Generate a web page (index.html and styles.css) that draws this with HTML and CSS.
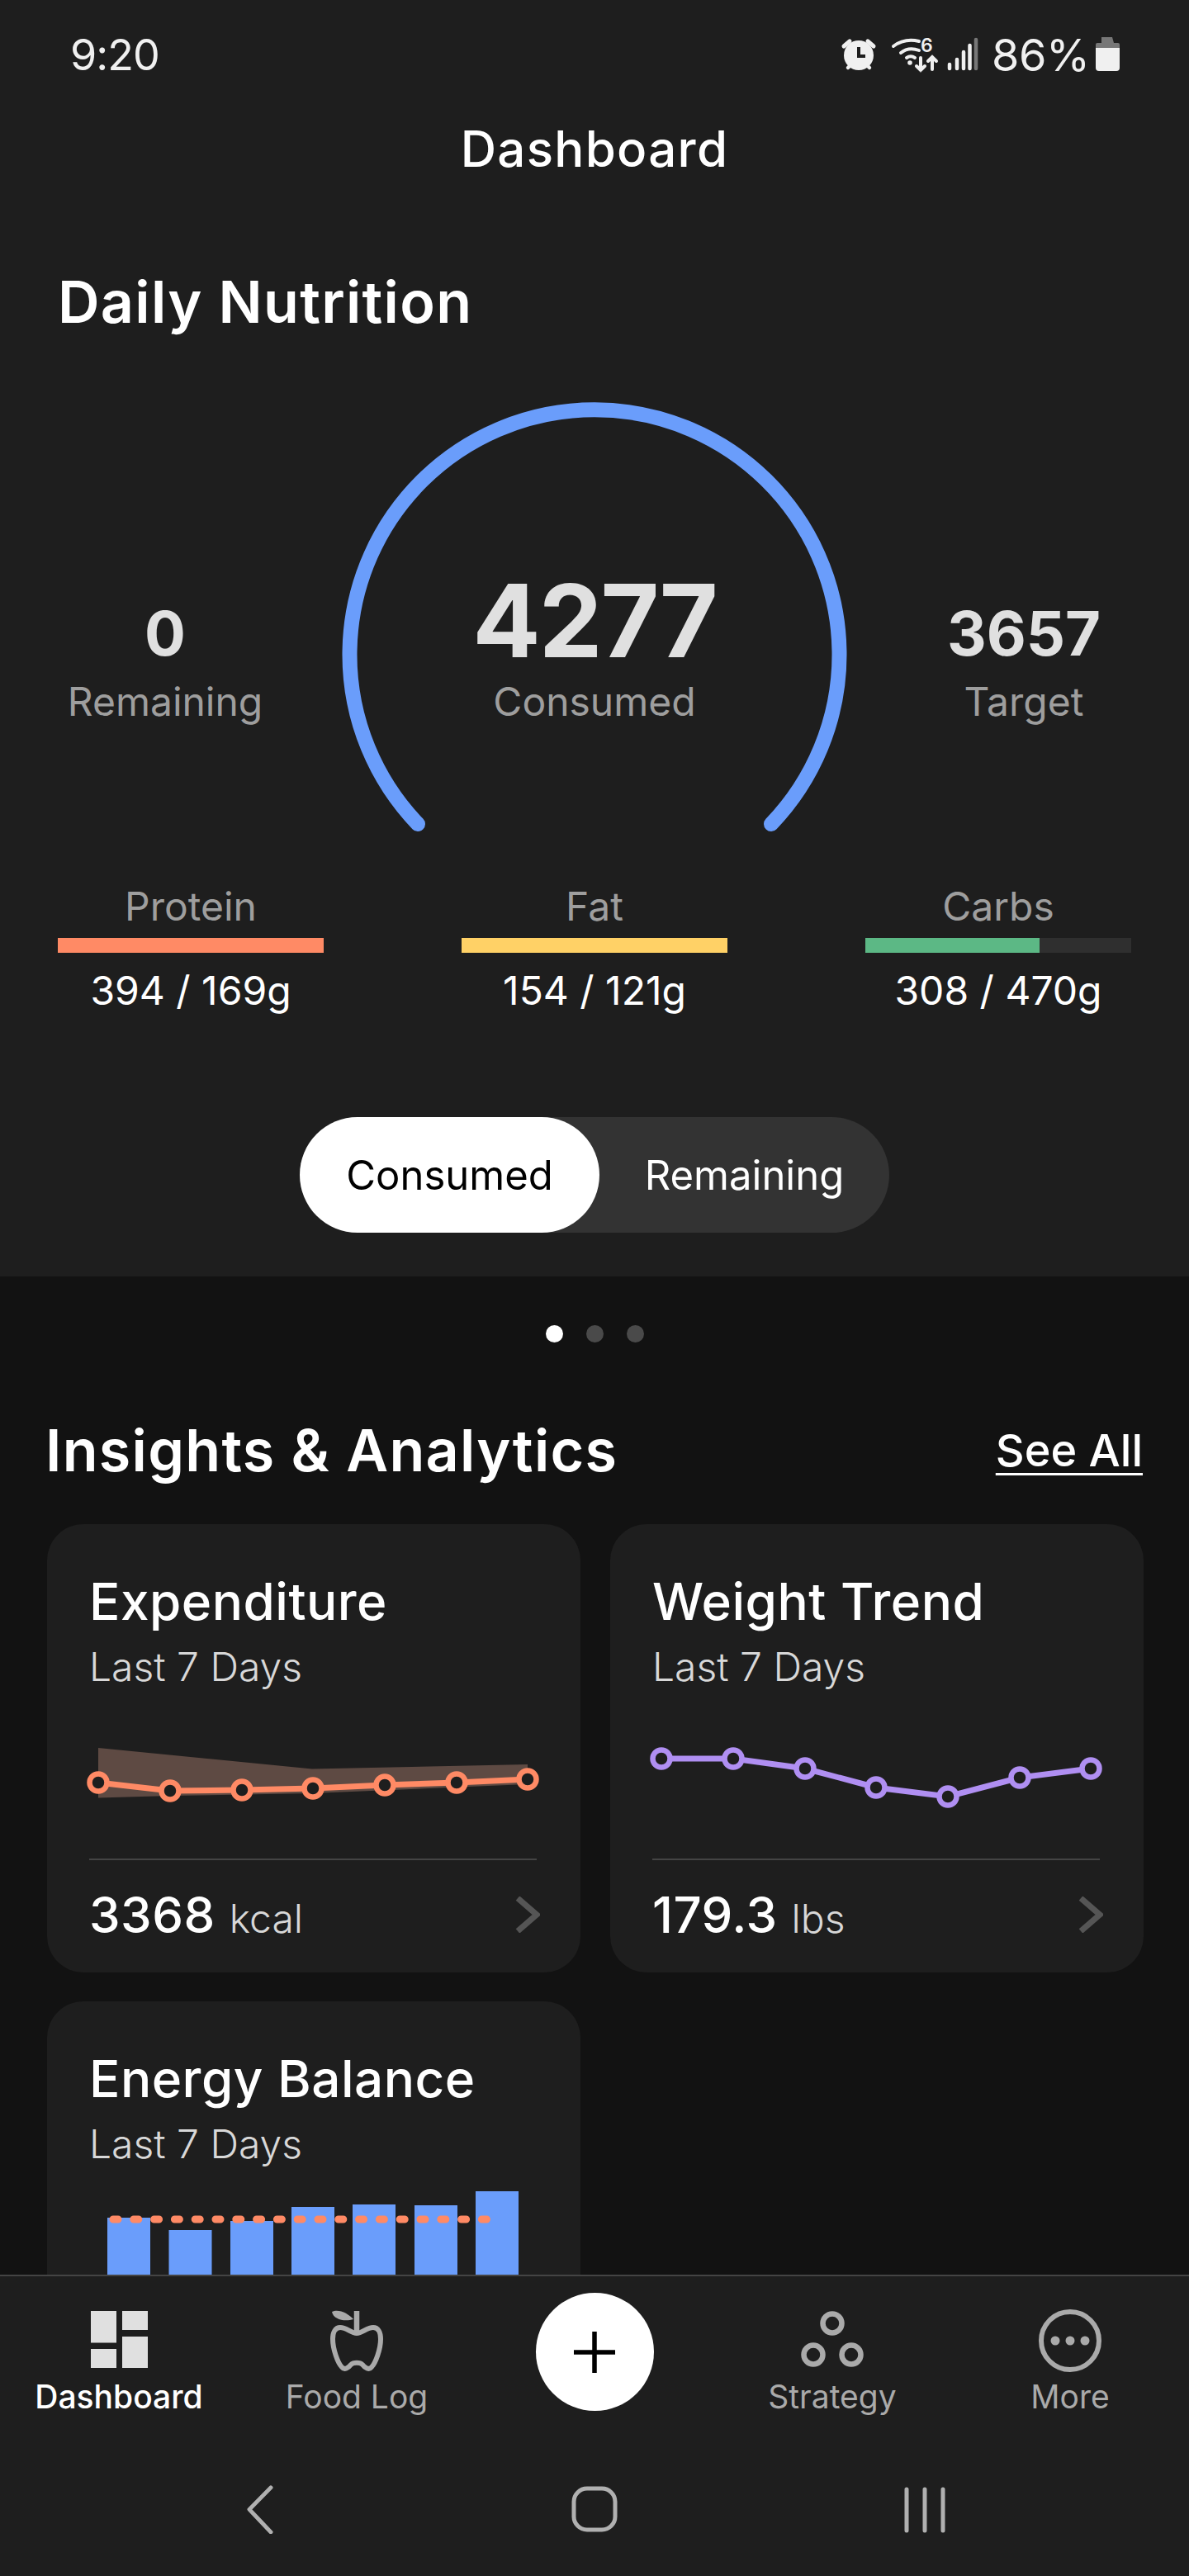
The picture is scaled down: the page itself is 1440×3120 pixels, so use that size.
FILE: index.html
```html
<!DOCTYPE html>
<html lang="en">
<head>
<meta charset="utf-8">
<title>Dashboard</title>
<link rel="stylesheet" href="styles.css">
</head>
<body>
<main class="scroll">
  <section class="top">
    <div class="status">
      <span class="clock">9:20</span>
      <div class="status-right">
        <svg class="st-alarm" viewBox="1018 46 44 44"><path d="M1022 58l7-6M1058 58l-7-6" stroke="#f0f0f0" stroke-width="5" stroke-linecap="round"/><path d="M1027 84l4-4M1053 84l-4-4" stroke="#f0f0f0" stroke-width="4.5" stroke-linecap="round"/><circle cx="1040" cy="69" r="18" fill="#f0f0f0"/><path d="M1040 59v11h8" fill="none" stroke="#1e1e1e" stroke-width="4"/></svg>
        <svg class="st-wifi" viewBox="1078 46 58 44"><g fill="none" stroke="#f0f0f0" stroke-width="4" stroke-linecap="round"><path d="M1082 58c8-6 18-9 31-6"/><path d="M1091 66c6-5 14-6 22-3"/><path d="M1098 72c3-2 7-2 10 0"/><path d="M1115 72v15M1110 82l5 5 5-5M1129 86V71M1124 76l5-5 5 5"/></g><circle cx="1102" cy="78" r="2.8" fill="#f0f0f0"/><text x="1115" y="65" class="st-six">6</text></svg>
        <svg class="st-signal" viewBox="1146 46 40 44"><g stroke="#f0f0f0" stroke-width="4.500" stroke-linecap="round"><path d="M1150 80v5M1159 74v11M1167 65v20M1174.500 57v28"/></g><path d="M1182 50v35" stroke="#777" stroke-width="4.500" stroke-linecap="round"/></svg>
        <span class="pct">86%</span>
        <svg class="st-batt" viewBox="1326 46 30 44"><path d="M1334 47h13l2 7h5a2 2 0 0 1 2 2v4h-29v-4a2 2 0 0 1 2-2h5z" fill="#777"/><path d="M1327 60h29v24a4 4 0 0 1-4 4h-21a4 4 0 0 1-4-4z" fill="#f0f0f0"/></svg>
      </div>
    </div>
    <h1 class="page-title">Dashboard</h1>
    <h2 class="daily">Daily Nutrition</h2>
    <div class="gauge-row">
      <div class="stat">
        <div class="stat-num">0</div>
        <div class="stat-label">Remaining</div>
      </div>
      <div class="gauge">
        <svg class="gauge-arc" viewBox="400 480 640 588"><path d="M506 998A296.500 296.500 0 1 1 934 998" fill="none" stroke="#6a9dfb" stroke-width="18" stroke-linecap="round"/></svg>
        <div class="gauge-center">
          <div class="gauge-num">4277</div>
          <div class="stat-label">Consumed</div>
        </div>
      </div>
      <div class="stat">
        <div class="stat-num">3657</div>
        <div class="stat-label">Target</div>
      </div>
    </div>
    <div class="macros">
      <div class="macro">
        <div class="macro-label">Protein</div>
        <div class="track"><div class="fill fill-protein" style="width:100%"></div></div>
        <div class="macro-val">394 / 169g</div>
      </div>
      <div class="macro">
        <div class="macro-label">Fat</div>
        <div class="track"><div class="fill fill-fat" style="width:100%"></div></div>
        <div class="macro-val">154 / 121g</div>
      </div>
      <div class="macro">
        <div class="macro-label">Carbs</div>
        <div class="track"><div class="fill fill-carbs" style="width:65.5%"></div></div>
        <div class="macro-val">308 / 470g</div>
      </div>
    </div>
    <div class="toggle">
      <div class="seg seg-on">Consumed</div>
      <div class="seg">Remaining</div>
    </div>
  </section>

  <div class="dots"><i class="dot dot-on"></i><i class="dot"></i><i class="dot"></i></div>

  <div class="insights-head">
    <h2 class="insights">Insights &amp; Analytics</h2>
    <a class="see-all">See All</a>
  </div>

  <div class="cards">
    <article class="card">
      <h3 class="card-title">Expenditure</h3>
      <div class="card-sub">Last 7 Days</div>
      <svg class="chart" viewBox="57 2049 646 202">
        <path d="M119 2117L378 2142.500L639 2137V2161L378 2172L206 2175L119 2177.500Z" fill="#5e4a43"/>
        <polyline points="119,2159 206,2169 293,2168 379,2166 466,2162 553,2159 639,2155" fill="none" stroke="#ff8a65" stroke-width="7"/>
        <g fill="#1e1e1e" stroke="#ff8a65" stroke-width="6.5"><circle cx="119" cy="2159" r="10.500"/><circle cx="206" cy="2169" r="10.500"/><circle cx="293" cy="2168" r="10.500"/><circle cx="379" cy="2166" r="10.500"/><circle cx="466" cy="2162" r="10.500"/><circle cx="553" cy="2159" r="10.500"/><circle cx="639" cy="2155" r="10.500"/></g>
      </svg>
      <div class="card-rule"></div>
      <div class="card-foot">
        <div><span class="val">3368</span><span class="unit">kcal</span></div>
        <svg class="chev" viewBox="0 0 30 44"><path d="M3 2l23 20-23 20" fill="none" stroke="#555" stroke-width="7"/></svg>
      </div>
    </article>
    <article class="card">
      <h3 class="card-title">Weight Trend</h3>
      <div class="card-sub">Last 7 Days</div>
      <svg class="chart" viewBox="739 2049 646 202">
        <polyline points="801,2130 888,2130 975,2142 1061,2165 1148,2176 1235,2153 1321,2142" fill="none" stroke="#b08ff2" stroke-width="7"/>
        <g fill="#1e1e1e" stroke="#b08ff2" stroke-width="6.5"><circle cx="801" cy="2130" r="10.500"/><circle cx="888" cy="2130" r="10.500"/><circle cx="975" cy="2142" r="10.500"/><circle cx="1061" cy="2165" r="10.500"/><circle cx="1148" cy="2176" r="10.500"/><circle cx="1235" cy="2153" r="10.500"/><circle cx="1321" cy="2142" r="10.500"/></g>
      </svg>
      <div class="card-rule"></div>
      <div class="card-foot">
        <div><span class="val">179.3</span><span class="unit">lbs</span></div>
        <svg class="chev" viewBox="0 0 30 44"><path d="M3 2l23 20-23 20" fill="none" stroke="#555" stroke-width="7"/></svg>
      </div>
    </article>
    <article class="card">
      <h3 class="card-title">Energy Balance</h3>
      <div class="card-sub">Last 7 Days</div>
      <svg class="chart" viewBox="57 2627 646 202">
        <g fill="#6a9dfb"><rect x="130" y="2686" width="52" height="143"/><rect x="204.500" y="2701" width="52" height="128"/><rect x="279" y="2690" width="52" height="139"/><rect x="353" y="2673" width="52" height="156"/><rect x="427" y="2670" width="52" height="159"/><rect x="502" y="2671" width="52" height="158"/><rect x="576" y="2654" width="52" height="175"/></g>
        <path d="M137 2688H602" fill="none" stroke="#ff8a65" stroke-width="9" stroke-linecap="round" stroke-dasharray="6 18.800"/>
      </svg>
    </article>
  </div>
</main>

<nav class="nav">
  <div class="tabs">
    <div class="tab tab-on">
      <svg class="tab-icon" viewBox="106 2797 76 76"><g fill="#e0e0e0"><rect x="110" y="2799" width="31" height="38.500"/><rect x="110" y="2845" width="31" height="23"/><rect x="148" y="2799" width="31" height="23"/><rect x="148" y="2830" width="31" height="38"/></g></svg>
      <span class="tab-label">Dashboard</span>
    </div>
    <div class="tab">
      <svg class="tab-icon" viewBox="394 2797 76 76"><path d="M432 2826C425 2826 420 2819 412 2819C406 2819 403 2825 403 2833C403 2845 409 2862 414 2867C417 2871 422 2868 425 2864C428 2861 436 2861 439 2864C442 2868 447 2871 450 2867C455 2862 461 2845 461 2833C461 2825 458 2819 452 2819C444 2819 439 2826 432 2826Z" fill="none" stroke="#aaa" stroke-width="6"/><path d="M432 2799V2826" stroke="#aaa" stroke-width="6.500"/><path d="M402 2800C410 2796 422 2802 428 2809C418 2812 404 2810 402 2800Z" fill="#aaa"/></svg>
      <span class="tab-label">Food Log</span>
    </div>
    <div class="tab">
      <button class="fab" type="button"><svg class="fab-plus" viewBox="0 0 52 52"><path d="M26 1v50M1 26h50" stroke="#000" stroke-width="5.500"/></svg></button>
    </div>
    <div class="tab">
      <svg class="tab-icon" viewBox="970 2797 76 76"><g fill="none" stroke="#aaa" stroke-width="6.500"><circle cx="1008" cy="2814" r="11.500"/><circle cx="985" cy="2852" r="11.500"/><circle cx="1031" cy="2852" r="11.500"/></g></svg>
      <span class="tab-label">Strategy</span>
    </div>
    <div class="tab">
      <svg class="tab-icon" viewBox="1258 2795 76 76"><circle cx="1296" cy="2833" r="35" fill="none" stroke="#aaa" stroke-width="6"/><g fill="#aaa"><circle cx="1278" cy="2833" r="5.500"/><circle cx="1296" cy="2833" r="5.500"/><circle cx="1314" cy="2833" r="5.500"/></g></svg>
      <span class="tab-label">More</span>
    </div>
  </div>
  <div class="sysnav">
    <svg class="sys sys-back" viewBox="0 0 36 60"><path d="M30 4L4 31l26 28" transform="scale(1 .98)" fill="none" stroke="#b0b0b0" stroke-width="5" stroke-linecap="round" stroke-linejoin="round"/></svg>
    <svg class="sys" viewBox="0 0 56 60"><rect x="3" y="5" width="50" height="50" rx="16" fill="none" stroke="#b0b0b0" stroke-width="5"/></svg>
    <svg class="sys" viewBox="0 0 50 60"><path d="M3 6v50M25 6v50M47 6v50" stroke="#b0b0b0" stroke-width="5" stroke-linecap="round"/></svg>
  </div>
</nav>
</body>
</html>
```

FILE: styles.css
```css
* { box-sizing: border-box; }
html, body { margin: 0; padding: 0; }
body {
  width: 1440px;
  height: 3120px;
  display: flex;
  flex-direction: column;
  background: #121212;
  color: #fff;
  font-family: Inter, "Open Sans", sans-serif;
  overflow: hidden;
}
h1, h2, h3 { margin: 0; }

.scroll { flex: 1; min-height: 0; overflow: hidden; }
.top { background: #1e1e1e; padding-bottom: 53px; }

.status {
  height: 132px;
  padding: 0 84px 0 85px;
  display: flex;
  align-items: center;
  justify-content: space-between;
}
.clock { font-size: 52px; letter-spacing: -1px; color: #f0f0f0; }
.status-right { display: flex; align-items: center; }
.st-alarm { width: 44px; height: 44px; margin-right: 16px; }
.st-wifi { width: 58px; height: 44px; margin-right: 10px; overflow: visible; }
.st-six { font-size: 23px; font-weight: 600; fill: #f0f0f0; }
.st-signal { width: 40px; height: 44px; margin-right: 15px; }
.pct { width: 121px; font-size: 54px; letter-spacing: -.5px; white-space: nowrap; color: #f0f0f0; margin-right: 4px; }
.st-batt { width: 30px; height: 44px; }

.page-title {
  height: 96px;
  line-height: 96px;
  text-align: center;
  font-size: 60px;
  font-weight: 500;
  letter-spacing: 1.3px;
}
.daily {
  margin-top: 98px;
  padding-left: 70px;
  line-height: 80px;
  font-size: 70px;
  font-weight: 600;
  letter-spacing: 1.3px;
}

.gauge-row { margin-top: 74px; display: flex; height: 588px; }
.stat { width: 400px; padding-top: 242px; text-align: center; }
.stat-num { font-size: 74px; line-height: 90px; font-weight: 700; color: #e0e0e0; }
.stat-label { margin-top: 8px; font-size: 48px; line-height: 60px; color: #9e9e9e; }
.gauge { width: 640px; position: relative; }
.gauge-arc { display: block; width: 640px; height: 588px; }
.gauge-center { position: absolute; top: 207px; left: 0; right: 0; text-align: center; }
.gauge-num { font-size: 122px; line-height: 130px; font-weight: 700; letter-spacing: -2px; color: #e0e0e0; }
.gauge-center .stat-label { margin-top: 3px; }

.macros { display: flex; justify-content: space-between; padding: 0 70px; }
.macro { width: 322px; text-align: center; }
.macro-label { font-size: 48px; line-height: 60px; color: #9e9e9e; }
.track { margin-top: 8px; height: 18px; background: #2f2f2f; }
.fill { height: 100%; }
.fill-protein { background: #ff8a65; }
.fill-fat { background: #ffd166; }
.fill-carbs { background: #5cb885; }
.macro-val { margin-top: 16px; font-size: 48px; line-height: 60px; white-space: nowrap; }

.toggle {
  margin: 123px auto 0;
  width: 714px;
  height: 140px;
  display: flex;
  border-radius: 70px;
  background: #333;
}
.seg {
  display: flex;
  align-items: center;
  justify-content: center;
  flex: 1;
  font-size: 49px;
}
.seg-on { flex: 0 0 363px; border-radius: 70px; background: #fff; color: #000; }

.dots { padding-top: 59px; display: flex; justify-content: center; gap: 28px; }
.dot { width: 21px; height: 21px; border-radius: 50%; background: #4a4a4a; }
.dot-on { background: #fff; }

.insights-head {
  margin-top: 90px;
  padding: 0 56px 0 55px;
  display: flex;
  justify-content: space-between;
  align-items: center;
  height: 80px;
}
.insights { font-size: 70px; font-weight: 600; letter-spacing: 1.3px; }
.see-all { font-size: 54px; font-weight: 500; text-decoration: underline; text-underline-offset: 8px; text-decoration-thickness: 3px; }

.cards {
  margin: 50px 55px 0 57px;
  display: grid;
  grid-template-columns: 646px 646px;
  column-gap: 36px;
  row-gap: 35px;
}
.card {
  height: 543px;
  padding: 59px 53px 0 51px;
  border-radius: 44px;
  background: #1e1e1e;
}
.card-title { font-size: 62px; line-height: 70px; font-weight: 500; letter-spacing: .5px; }
.card-sub { margin-top: 14px; font-size: 48px; line-height: 60px; font-weight: 300; color: #d8d8d8; }
.chart { display: block; width: 646px; height: 202px; margin: 0 -53px 0 -51px; }
.card-rule { height: 2px; background: #444; }
.card-foot { margin-top: 31px; display: flex; justify-content: space-between; align-items: center; height: 70px; }
.val { font-size: 60px; font-weight: 500; letter-spacing: .5px; }
.unit { margin-left: 17px; font-size: 48px; font-weight: 300; color: #d8d8d8; }
.chev { width: 30px; height: 44px; margin-right: -4px; }

.nav { flex: 0 0 365px; background: #1e1e1e; border-top: 2px solid #444; }
.tabs { display: grid; grid-template-columns: repeat(5, 288px); padding-top: 40px; height: 168px; }
.tab { display: flex; flex-direction: column; align-items: center; }
.tab-icon { width: 76px; height: 76px; }
.tab-label { margin-top: 8px; font-size: 39px; line-height: 44px; color: #aaa; }
.tab-on .tab-label { color: #fff; font-weight: 500; }
.fab {
  margin-top: -20px;
  width: 143px;
  height: 143px;
  border: 0;
  padding: 0;
  border-radius: 50%;
  background: #fff;
  display: flex;
  align-items: center;
  justify-content: center;
}
.fab-plus { width: 52px; height: 52px; }
.sysnav {
  margin-top: 84px;
  padding: 0 120px;
  display: grid;
  grid-template-columns: repeat(3, 400px);
  justify-items: center;
}
.sys { height: 60px; }
.sys-back { margin-right: 8px; }
```
